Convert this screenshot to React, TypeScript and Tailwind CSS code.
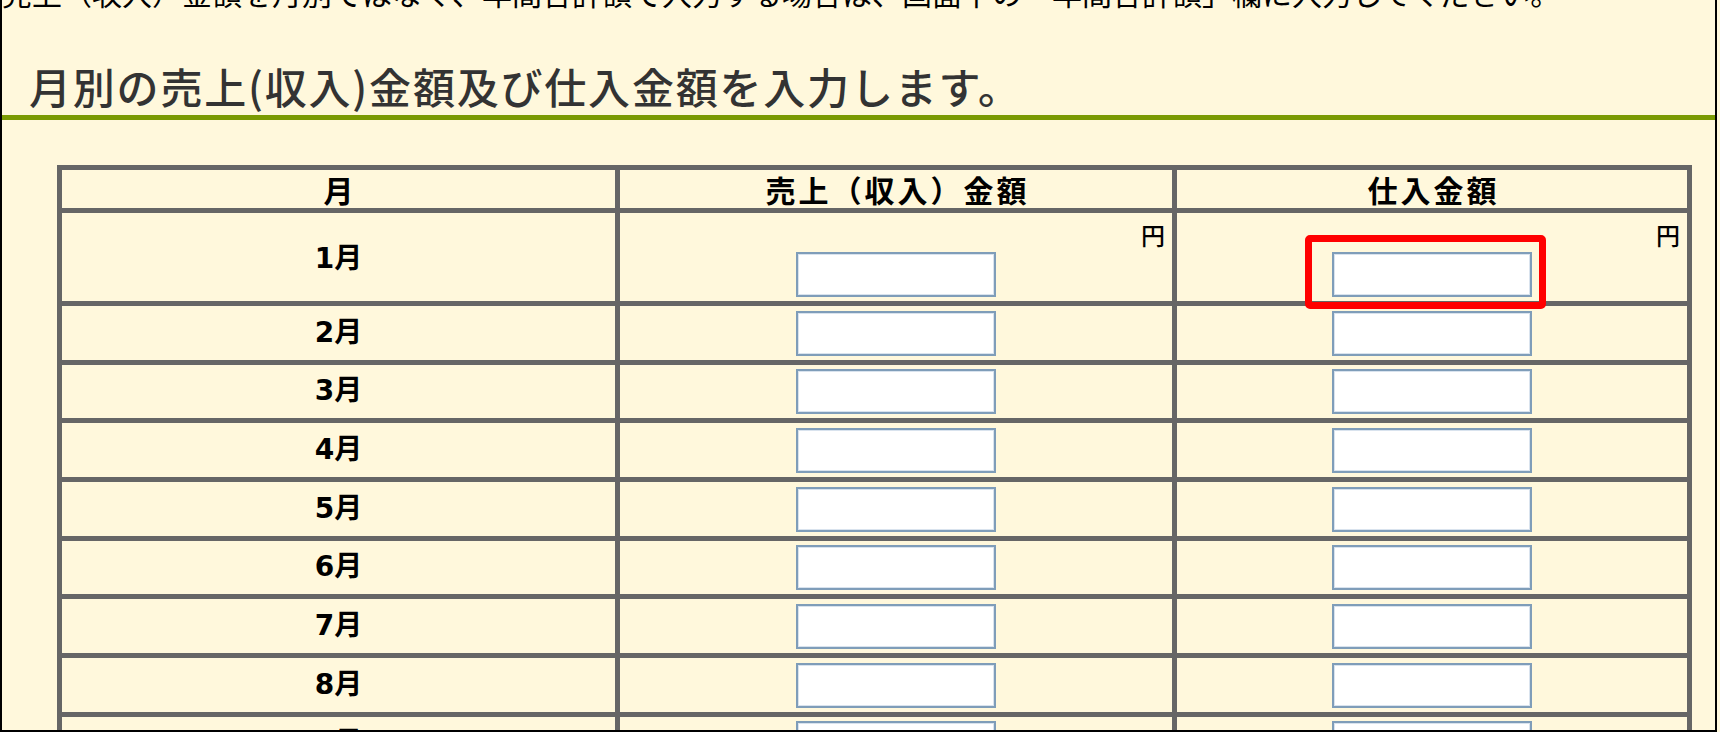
import React from "react";

const months = ["1月", "2月", "3月", "4月", "5月", "6月", "7月", "8月", "9月"];

function AmountInput() {
  return (
    <div className="w-[200px] h-[45px] border-2 border-[#7f9db9] bg-white shadow-[inset_0_0_0_1px_#d9e3ee]" />
  );
}

export default function App() {
  return (
    <div className="w-[1720px] h-[732px] bg-[#fff8dc] overflow-hidden">
      <div
        className="relative w-[1717px] h-[732px] border-l-2 border-r-2 border-b-2 border-black bg-[#fff8dc] overflow-hidden"
        style={{ fontFamily: '"Noto Sans CJK JP", "Noto Sans", sans-serif' }}
      >
        <p className="mt-[-23px] text-[30px] leading-[30px] text-black whitespace-nowrap">
          売上（収入）金額を月別ではなく、年間合計額で入力する場合は、画面下の「年間合計額」欄に入力してください。
        </p>

        <h2 className="mt-[58px] pl-[27px] pb-[8px] border-b-[5px] border-[#7a9a02] text-[42px] leading-[42px] tracking-[1.8px] text-[#333333] font-medium whitespace-nowrap">
          月別の売上(収入)金額及び仕入金額を入力します。
        </h2>

        <div className="mt-[45px] ml-[55px] w-[1635px] bg-[#666666] p-[5px] grid grid-cols-[553px_552px_510px] gap-[5px]">
          {["月", "売上（収入）金額", "仕入金額"].map((h) => (
            <div
              key={h}
              className="h-[38px] bg-[#fff8dc] flex items-center justify-center text-[30px] leading-[38px] font-bold tracking-[3px] text-black"
            >
              <span className="mr-[-3px]">{h}</span>
            </div>
          ))}

          {months.map((m, i) => {
            const first = i === 0;
            const rowH = first ? "h-[88px]" : "h-[53.67px]";
            return (
              <React.Fragment key={m}>
                <div
                  className={`${rowH} bg-[#fff8dc] flex items-center justify-center text-[28px] font-bold text-black ${first ? "pt-[3px]" : ""}`}
                  style={{ fontFamily: '"DejaVu Sans", "Noto Sans CJK JP", sans-serif' }}
                >
                  {m}
                </div>
                {[0, 1].map((c) =>
                  first ? (
                    <div key={c} className={`${rowH} relative bg-[#fff8dc] flex flex-col items-center`}>
                      <div className="w-full text-right pr-[7px] pt-[8px] text-[24px] leading-[28px] font-medium text-black">
                        円
                      </div>
                      <div className="mt-auto mb-[4px]">
                        <AmountInput />
                      </div>
                      {c === 1 && (
                        <div className="absolute left-[128px] top-[22px] z-10 w-[241px] h-[74px] border-[7px] border-[#ff0000] rounded-[5px]" />
                      )}
                    </div>
                  ) : (
                    <div key={c} className={`${rowH} bg-[#fff8dc] flex items-center justify-center pt-[1px]`}>
                      <AmountInput />
                    </div>
                  )
                )}
              </React.Fragment>
            );
          })}
        </div>
      </div>
    </div>
  );
}
